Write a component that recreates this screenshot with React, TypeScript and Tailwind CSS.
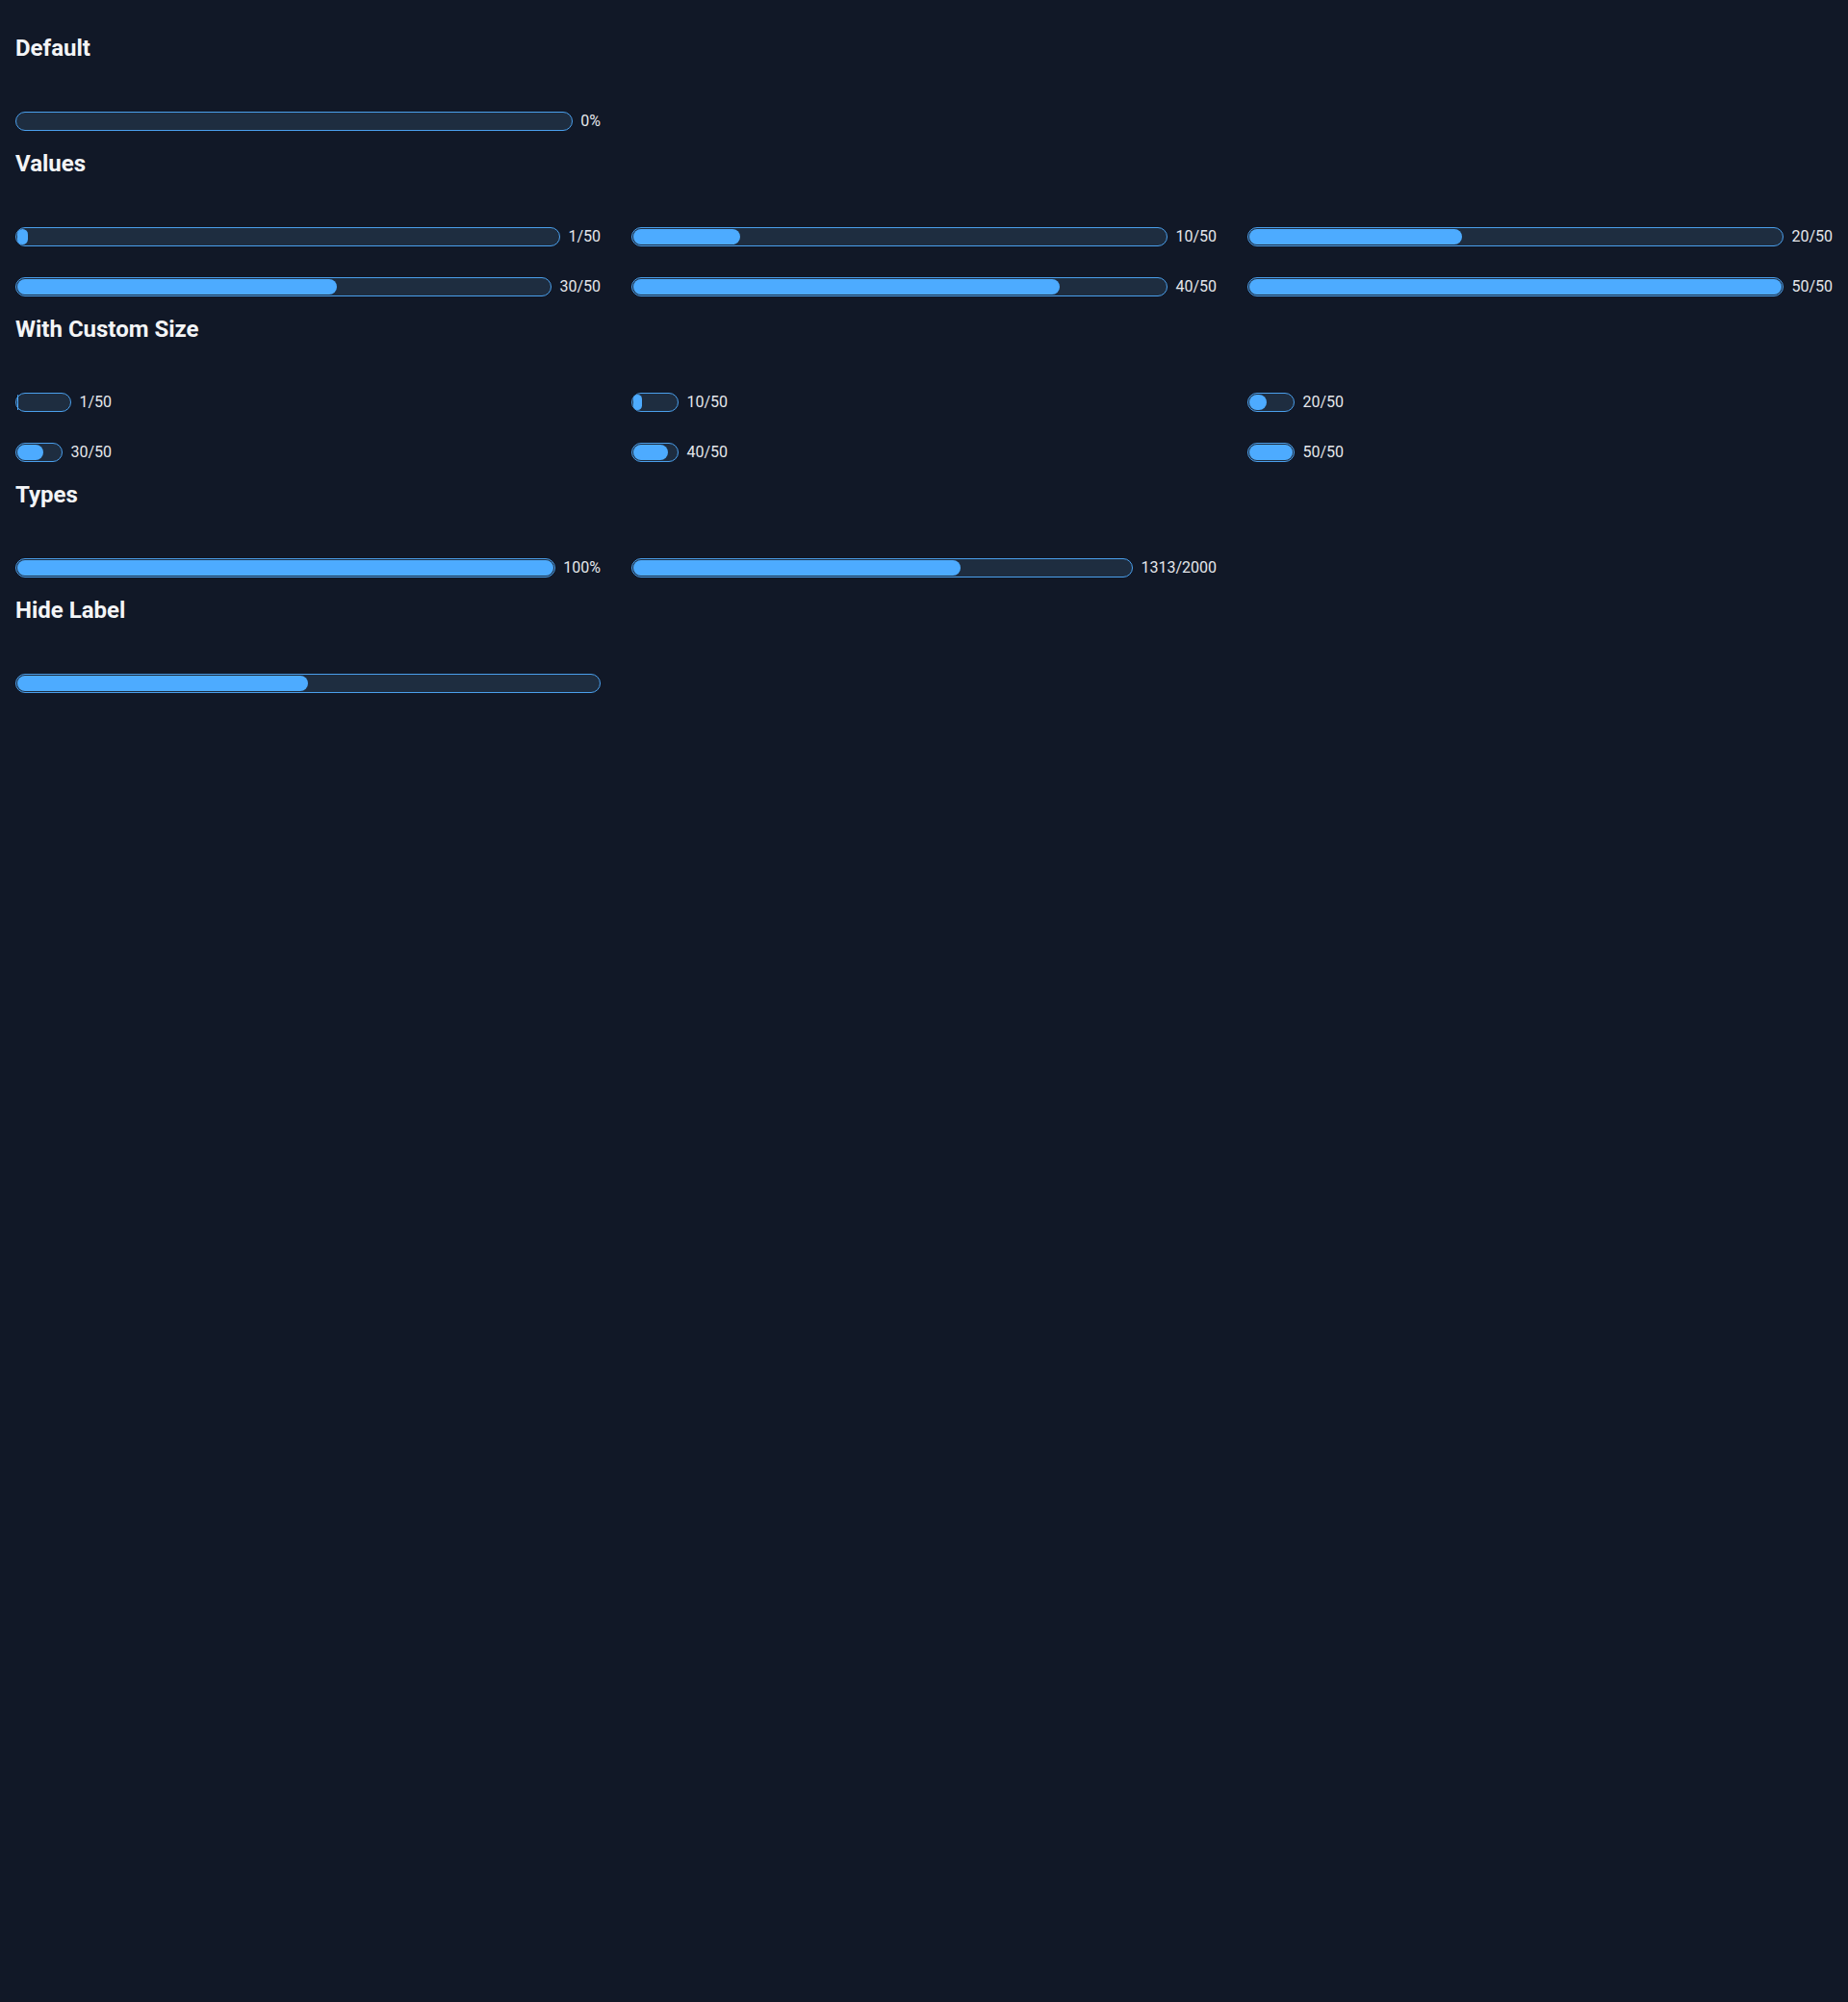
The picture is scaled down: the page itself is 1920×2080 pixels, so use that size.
import React from 'react';

type BarProps = {
  value: number;
  max?: number;
  label?: string;
  className?: string;
};

const Progress: React.FC<BarProps> = ({ value, max = 100, label, className = '' }) => {
  const pct = Math.min(100, Math.max(0, (value / max) * 100));
  return (
    <div className={`flex items-center gap-2 h-6 ${className}`}>
      <div className="flex-1 h-5 rounded-full border border-[#4a9fec] bg-[#1e2d40] p-px">
        <div className="h-full rounded-full bg-[#4dabff]" style={{ width: `${pct}%` }} />
      </div>
      {label && <span className="text-base leading-6 text-[#e5e7eb] whitespace-nowrap">{label}</span>}
    </div>
  );
};

const Section: React.FC<{ title: string; children: React.ReactNode }> = ({ title, children }) => (
  <section className="mb-4">
    <h2 className="text-2xl leading-8 font-bold text-[#f3f4f6]">{title}</h2>
    <div className="mt-12 grid grid-cols-3 gap-x-8 gap-y-7">{children}</div>
  </section>
);

const values = [1, 10, 20, 30, 40, 50];

export default function App() {
  return (
    <div className="min-h-[2080px] w-full bg-[#111827] px-4 pt-[34px] font-['Roboto','Liberation_Sans',sans-serif]">
      <Section title="Default">
        <Progress value={0} label="0%" />
      </Section>

      <Section title="Values">
        {values.map((v) => (
          <Progress key={v} value={v} max={50} label={`${v}/50`} />
        ))}
      </Section>

      <Section title="With Custom Size">
        {values.map((v) => (
          <Progress key={v} value={v} max={50} label={`${v}/50`} className="w-[100px]" />
        ))}
      </Section>

      <Section title="Types">
        <Progress value={100} label="100%" />
        <Progress value={1313} max={2000} label="1313/2000" />
      </Section>

      <Section title="Hide Label">
        <Progress value={50} />
      </Section>
    </div>
  );
}
